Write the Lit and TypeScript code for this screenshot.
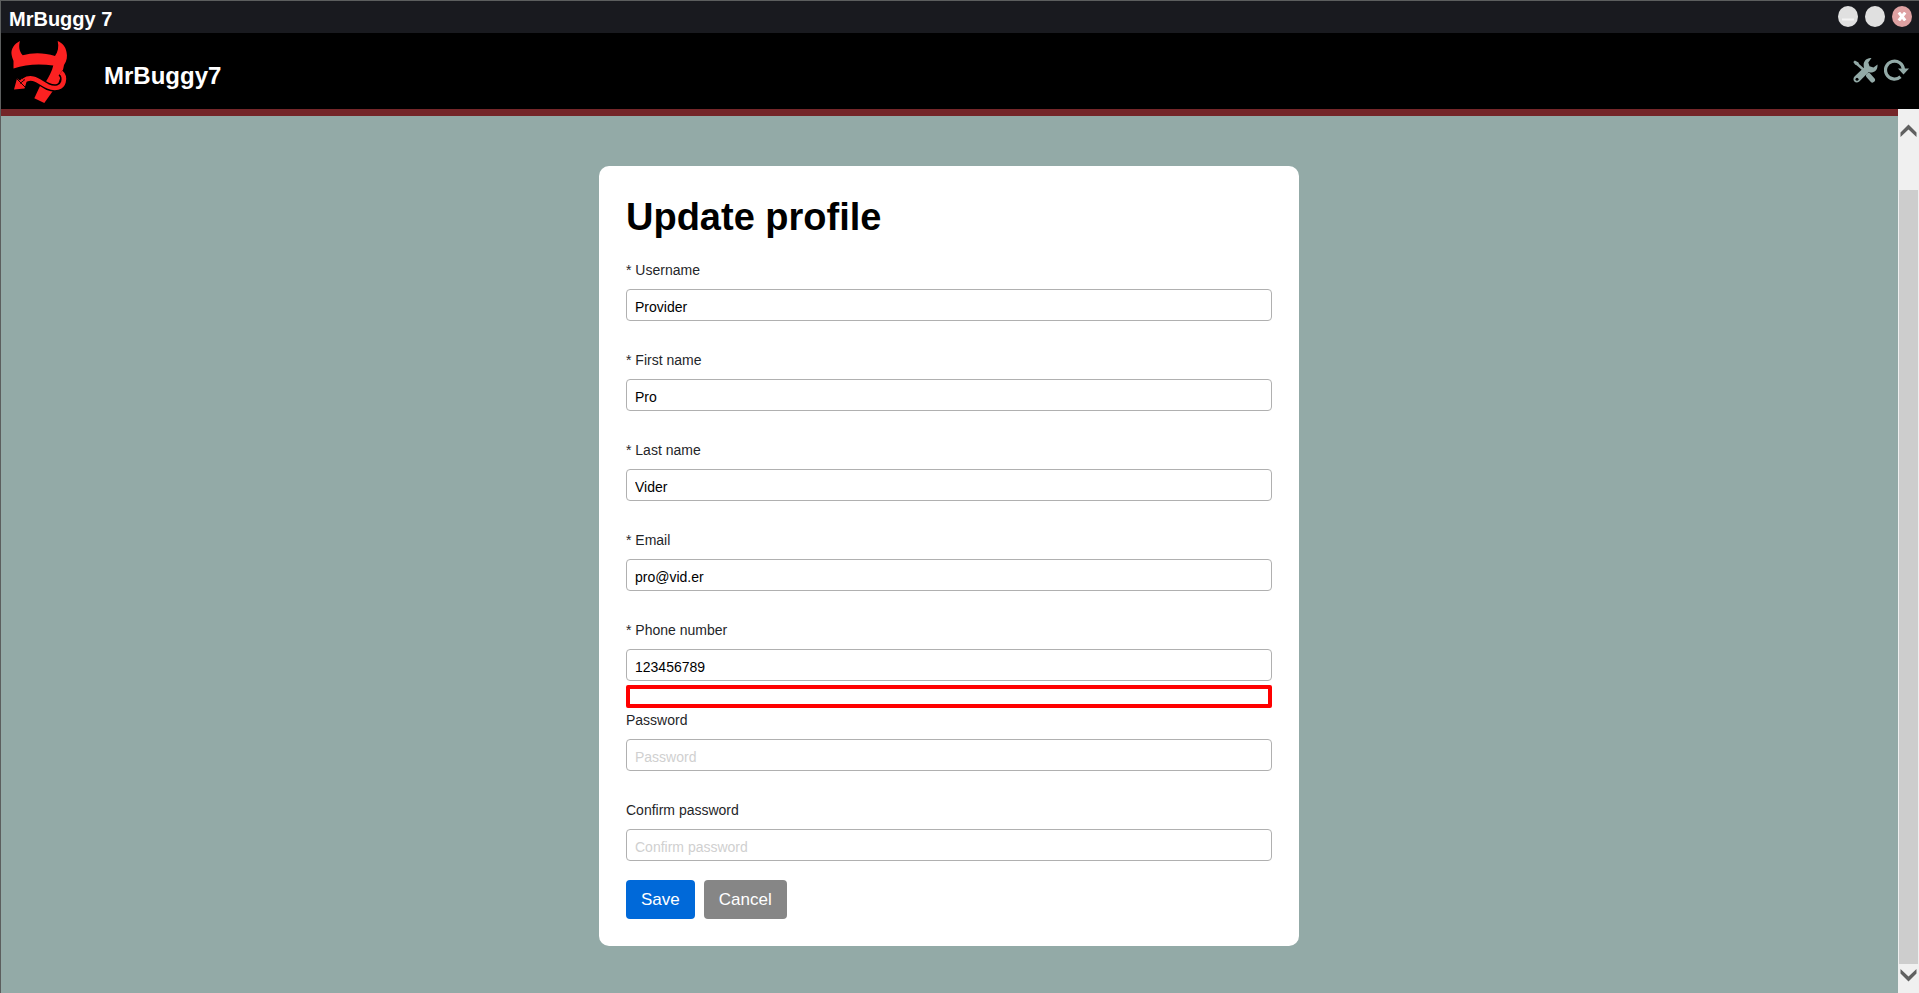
import { LitElement, html, css, svg, nothing } from "lit";
import { customElement } from "lit/decorators.js";

interface Field {
  id: string;
  label: string;
  value?: string;
  placeholder?: string;
  type?: string;
  flagged?: boolean;
}

const FIELDS: Field[] = [
  { id: "username", label: "* Username", value: "Provider" },
  { id: "first-name", label: "* First name", value: "Pro" },
  { id: "last-name", label: "* Last name", value: "Vider" },
  { id: "email", label: "* Email", value: "pro@vid.er" },
  { id: "phone", label: "* Phone number", value: "123456789", flagged: true },
  { id: "password", label: "Password", placeholder: "Password", type: "password" },
  { id: "confirm", label: "Confirm password", placeholder: "Confirm password", type: "password" },
];

const logo = svg`
  <svg class="logo" viewBox="0 0 57 63" aria-hidden="true">
    <path fill="#fc2121" d="M9 0C3 3 0 8 0.500 13C0.800 16 2 18 2.500 20V27.500C15 23 29 22.500 42.300 24.500C41 30 38 36 34 42L46 46L51 32C52 29 52.500 27 53 24C56 20 56.500 15 55.500 11C54.500 5 51 2 46.700 0C48 6 47 11 44 15C33 11.500 22 11.200 11.700 14.300C8 10 7.500 5 9 0Z"/>
    <path fill="#fc2121" d="M29 45L23.300 57.300L33.300 62L42.500 49Z"/>
    <path fill="none" stroke="#000" stroke-width="7.500" d="M19 37C26 36.500 31 43 37 45.500C44 48.500 51 47 52.500 41C53.500 37 53 34 50 31.500"/>
    <path fill="none" stroke="#fc2121" stroke-width="4.600" d="M13 39.500C22 33.500 29 42 37 45.500C44 48.500 51 47 52.500 41C53.500 37 53 34 50 31.500"/>
    <path fill="#fc2121" d="M6 37.500L3 48.500L13.500 47.500L15.500 41L11 37.500L9 39.500Z"/>
    <path fill="none" stroke="#000" stroke-width="0.900" d="M6 38L14 46M9 42.500L14 38.500"/>
  </svg>`;

const toolsIcon = svg`
  <svg viewBox="0 0 25 25" width="25" height="25" aria-hidden="true">
    <path fill="none" stroke="#93aaa7" stroke-width="2.400" d="M3 5L12 13"/>
    <path fill="#93aaa7" d="M0.300 4L1.800 2.500L5.500 4.500L6 7L4.500 7.500L2 6.500Z"/>
    <path fill="none" stroke="#93aaa7" stroke-width="5" stroke-linecap="round" d="M15.500 17.500L19.500 22"/>
    <path fill="#93aaa7" d="M18.500 0C13 -0.300 9.500 4 11 9.500L1.500 18.500C-1.500 22 2.500 26.500 6.300 23.500L15.500 14.300C21 15.500 25 12 24.500 6.500L20.500 9.500L16.500 8.300L15.300 4.500Z"/>
    <circle cx="4" cy="21.300" r="1.500" fill="#000"/>
  </svg>`;

const refreshIcon = svg`
  <svg viewBox="0 0 25 22" width="25" height="22" aria-hidden="true">
    <path fill="none" stroke="#93aaa7" stroke-width="3.200" d="M16.500 17.800A9 9 0 1 1 19.500 10.500"/>
    <path fill="#93aaa7" d="M14 9.500H25L19.500 15.500Z"/>
  </svg>`;

@customElement("app-root")
export class AppRoot extends LitElement {
  static styles = css`
    :host {
      display: flex;
      flex-direction: column;
      box-sizing: border-box;
      height: 100vh;
      overflow: hidden;
      border-top: 1px solid #5c5e5e;
      border-left: 1px solid #5c5e5e;
      background: #93aaa7;
      font-family: "Liberation Sans", Arial, sans-serif;
      font-size: 14px;
      color: #1f2629;
    }
    * { box-sizing: border-box; }
    button { border: 0; padding: 0; font: inherit; cursor: pointer; }
    svg { display: block; }
    .titlebar {
      display: flex;
      justify-content: space-between;
      align-items: flex-start;
      flex: none;
      height: 32px;
      padding: 5px 7px 0 8px;
      background: #191a1f;
      color: #fff;
    }
    .window-title { font-size: 20px; font-weight: bold; line-height: 26px; }
    .window-buttons { display: flex; gap: 7px; }
    .window-button {
      display: flex;
      justify-content: center;
      align-items: center;
      width: 20px;
      height: 21px;
      border-radius: 50%;
      background: #e0e0e0;
    }
    .close { background: #dea1a2; }
    .header {
      display: flex;
      align-items: center;
      flex: none;
      height: 76px;
      padding: 2px 10px 0;
      background: #000;
      color: #fff;
    }
    .logo { width: 57px; height: 63px; }
    .brand { flex: 1; padding: 8px 0 0 36px; font-size: 24px; line-height: 28px; font-weight: bold; }
    .tools { display: flex; align-items: center; gap: 6px; padding-bottom: 4px; }
    .tool { background: none; }
    .body { display: flex; flex: 1; min-height: 0; }
    .page {
      flex: 1;
      display: flex;
      flex-direction: column;
      align-items: center;
      border-top: 7px solid #742629;
      padding: 50px 1px 0 0;
    }
    .card {
      width: 100%;
      max-width: 700px;
      padding: 27px;
      border-radius: 10px;
      background: #fff;
    }
    .title { margin: 0 0 19px; font-size: 38px; line-height: 48px; font-weight: bold; color: #000; }
    .label { display: block; margin-bottom: 9px; line-height: 20px; }
    .input {
      display: block;
      width: 100%;
      height: 32px;
      margin: 0;
      padding: 4px 8px 0;
      border: 1px solid #b0b0b0;
      border-radius: 4px;
      background: #fff;
      font: inherit;
      color: #000;
      outline: none;
    }
    .input::placeholder { color: #d0d0d0; opacity: 1; }
    .message { height: 29px; padding-top: 4px; }
    .highlight { height: 23px; border: 4px solid #f00; border-radius: 2px; }
    .actions { display: flex; gap: 9px; margin-top: 19px; }
    .action {
      height: 39px;
      padding: 0 15px;
      border-radius: 4px;
      font-size: 17px;
      color: #fff;
      background: #868686;
    }
    .save { background: #0069d9; }
    .scrollbar {
      display: flex;
      flex-direction: column;
      align-items: center;
      flex: none;
      width: 21px;
      background: #f0f0f0;
    }
    .arrow { display: flex; align-items: center; justify-content: center; height: 29px; }
    .up { height: 42px; }
    .down { align-items: flex-start; padding-top: 5px; }
    .up, .down { flex: none; }
    .track { flex: 1; width: 19px; padding-top: 39px; display: flex; }
    .thumb { flex: 1; background: #cdcdcd; }
  `;

  private field(f: Field, last: boolean) {
    return html`
      <div class="field">
        <label class="label" for=${f.id}>${f.label}</label>
        <input class="input" id=${f.id} type=${f.type ?? "text"} .value=${f.value ?? ""}
          placeholder=${f.placeholder ?? nothing} />
        ${last ? nothing : html`<div class="message">
          ${f.flagged ? html`<div class="highlight"></div>` : nothing}
        </div>`}
      </div>`;
  }

  render() {
    return html`
      <div class="titlebar">
        <div class="window-title">MrBuggy 7</div>
        <div class="window-buttons">
          <button class="window-button" aria-label="Minimize">
            <svg width="12" height="11" viewBox="0 0 12 11"><path d="M0 8.500H12" stroke="#f4f4f4" stroke-width="2"/></svg>
          </button>
          <button class="window-button" aria-label="Maximize"></button>
          <button class="window-button close" aria-label="Close">
            <svg width="10" height="9" viewBox="0 0 10 9"><path d="M1.800 0.500L8.200 8.500M8.200 0.500L1.800 8.500" stroke="#fff" stroke-width="3"/></svg>
          </button>
        </div>
      </div>
      <header class="header">
        ${logo}
        <div class="brand">MrBuggy7</div>
        <div class="tools">
          <button class="tool" aria-label="Settings">${toolsIcon}</button>
          <button class="tool" aria-label="Refresh">${refreshIcon}</button>
        </div>
      </header>
      <div class="body">
        <main class="page">
          <form class="card" @submit=${(e: Event) => e.preventDefault()}>
            <h1 class="title">Update profile</h1>
            ${FIELDS.map((f, i) => this.field(f, i === FIELDS.length - 1))}
            <div class="actions">
              <button class="action save" type="submit">Save</button>
              <button class="action" type="button">Cancel</button>
            </div>
          </form>
        </main>
        <div class="scrollbar" aria-hidden="true">
          <div class="arrow up">
            <svg width="17" height="13" viewBox="0 0 17 13"><path d="M0.500 13V8.500L8.500 0.500L16.500 8.500V13L8.500 5.500Z" fill="#606060"/></svg>
          </div>
          <div class="track"><div class="thumb"></div></div>
          <div class="arrow down">
            <svg width="17" height="13" viewBox="0 0 17 13"><path d="M0.500 0V4.500L8.500 12.500L16.500 4.500V0L8.500 7.500Z" fill="#606060"/></svg>
          </div>
        </div>
      </div>`;
  }
}
